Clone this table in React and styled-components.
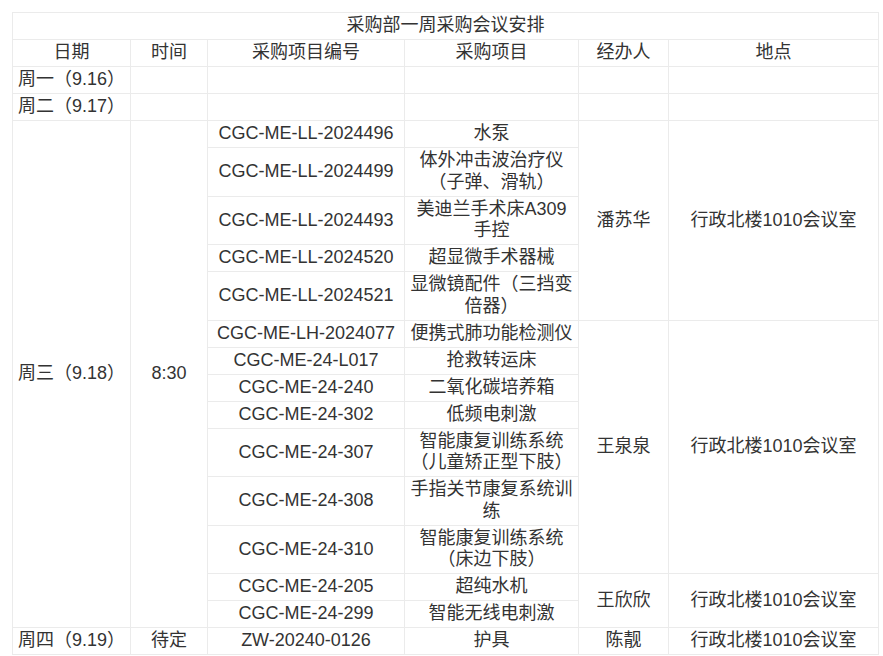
import React from 'react'
import styled, { createGlobalStyle } from "styled-components"

const GlobalStyle = createGlobalStyle`
    body {
        margin: 0;
        background: #ffffff;
        font-family: "Liberation Sans", "Noto Sans CJK SC", sans-serif;
        color: #333333;
    }
`

const Page = styled.div`
    padding: 12px 0 0 12px;
`

const Table = styled.table`
    width: 866px;
    border-collapse: collapse;
    table-layout: fixed;
    font-size: 18px;
    line-height: 21.5px;
`

const Cell = styled.td`
    border: 1px solid #ebebeb;
    padding: 2.25px 5px;
    text-align: ${props => props.$left ? 'left' : 'center'};
    vertical-align: middle;
    font-weight: normal;
    word-break: break-all;
`

const columns = [118, 77, 197, 174, 90, 210]

const headers = ['日期', '时间', '采购项目编号', '采购项目', '经办人', '地点']

const room = '行政北楼1010会议室'

// 周三的采购项目，按经办人分组
const groups = [
    {
        person: '潘苏华',
        items: [
            ['CGC-ME-LL-2024496', '水泵'],
            ['CGC-ME-LL-2024499', '体外冲击波治疗仪（子弹、滑轨）'],
            ['CGC-ME-LL-2024493', '美迪兰手术床A309手控'],
            ['CGC-ME-LL-2024520', '超显微手术器械'],
            ['CGC-ME-LL-2024521', '显微镜配件（三挡变倍器）'],
        ],
    },
    {
        person: '王泉泉',
        items: [
            ['CGC-ME-LH-2024077', '便携式肺功能检测仪'],
            ['CGC-ME-24-L017', '抢救转运床'],
            ['CGC-ME-24-240', '二氧化碳培养箱'],
            ['CGC-ME-24-302', '低频电刺激'],
            ['CGC-ME-24-307', '智能康复训练系统（儿童矫正型下肢）'],
            ['CGC-ME-24-308', '手指关节康复系统训练'],
            ['CGC-ME-24-310', '智能康复训练系统（床边下肢）'],
        ],
    },
    {
        person: '王欣欣',
        items: [
            ['CGC-ME-24-205', '超纯水机'],
            ['CGC-ME-24-299', '智能无线电刺激'],
        ],
    },
]

const total = groups.reduce((n, g) => n + g.items.length, 0)

const App = () => {
    const wedRows = []
    groups.forEach((g, gi) => {
        g.items.forEach((item, i) => {
            const first = gi === 0 && i === 0
            wedRows.push(
                <tr key={item[0]}>
                    {first && <Cell $left rowSpan={total}>周三（9.18）</Cell>}
                    {first && <Cell rowSpan={total}>8:30</Cell>}
                    <Cell>{item[0]}</Cell>
                    <Cell>{item[1]}</Cell>
                    {i === 0 && <Cell rowSpan={g.items.length}>{g.person}</Cell>}
                    {i === 0 && <Cell rowSpan={g.items.length}>{room}</Cell>}
                </tr>
            )
        })
    })

    return (
        <Page>
            <GlobalStyle />
            <Table>
                <colgroup>
                    {columns.map((w, i) => <col key={i} style={{ width: w }} />)}
                </colgroup>
                <tbody>
                    <tr>
                        <Cell colSpan={6}>采购部一周采购会议安排</Cell>
                    </tr>
                    <tr>
                        {headers.map(h => <Cell key={h}>{h}</Cell>)}
                    </tr>
                    <tr>
                        <Cell $left>周一（9.16）</Cell>
                        <Cell /><Cell /><Cell /><Cell /><Cell />
                    </tr>
                    <tr>
                        <Cell $left>周二（9.17）</Cell>
                        <Cell /><Cell /><Cell /><Cell /><Cell />
                    </tr>
                    {wedRows}
                    <tr>
                        <Cell $left>周四（9.19）</Cell>
                        <Cell>待定</Cell>
                        <Cell>ZW-20240-0126</Cell>
                        <Cell>护具</Cell>
                        <Cell>陈靓</Cell>
                        <Cell>{room}</Cell>
                    </tr>
                </tbody>
            </Table>
        </Page>
    )
}

export default App
